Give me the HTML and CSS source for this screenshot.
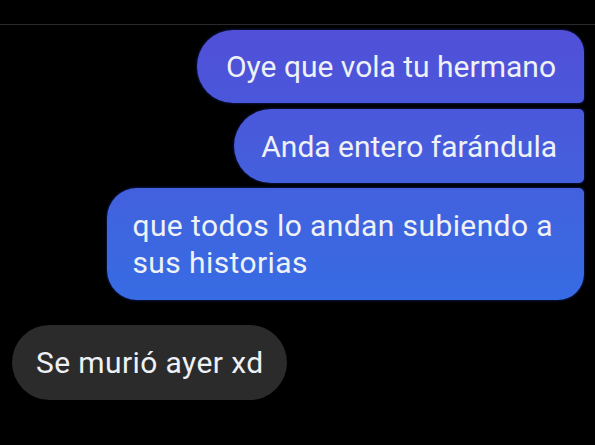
FILE: index.html
```html
<!DOCTYPE html>
<html lang="es">
<head>
<meta charset="utf-8">
<title>Chat</title>
<link rel="stylesheet" href="styles.css">
</head>
<body>
<div class="screen">
  <div class="topbar"></div>
  <div class="thread">
    <div class="msg sent first">Oye que vola tu hermano</div>
    <div class="msg sent middle">Anda entero farándula</div>
    <div class="msg sent last">que todos lo andan subiendo a<br>sus historias</div>
    <div class="msg received">Se murió ayer xd</div>
  </div>
</div>
</body>
</html>
```

FILE: styles.css
```css
html, body {
  margin: 0;
  padding: 0;
  background: #000;
}
.screen {
  width: 595px;
  height: 445px;
  background: #000;
  overflow: hidden;
  font-family: Roboto, "Noto Sans", sans-serif;
}
.topbar {
  height: 24px;
  border-bottom: 1px solid #2a2a2c;
}
.thread {
  display: flex;
  flex-direction: column;
  align-items: flex-end;
  gap: 5px;
  padding: 5px 11px 0 12px;
}
.msg {
  font-size: 30px;
  line-height: 37px;
  color: #eef1f6;
  padding: 18px 28px 18px 29px;
  box-sizing: border-box;
  white-space: nowrap;
}
.sent {
  background: linear-gradient(180deg, #5a4ed8 0%, #5050d8 8%, #465ddc 35%, #3a69e2 60%, #326fe6 80%, #2f72e8 100%) fixed;
  box-shadow: 0 0 2px 1px rgba(20, 30, 110, 0.6);
}
.first {
  border-radius: 36px 22px 5px 36px;
}
.middle {
  margin-top: 1px;
  padding: 19px 27px 18px 27px;
  border-radius: 37px 5px 5px 37px;
}
.last {
  padding: 19px 31px 19px 25px;
  letter-spacing: 0.4px;
  border-radius: 30px 5px 26px 30px;
}
.received {
  align-self: flex-start;
  margin-top: 20px;
  background: #2b2b2c;
  border-radius: 38px;
  letter-spacing: 0.4px;
  padding: 19px 23px 19px 24px;
}
```
